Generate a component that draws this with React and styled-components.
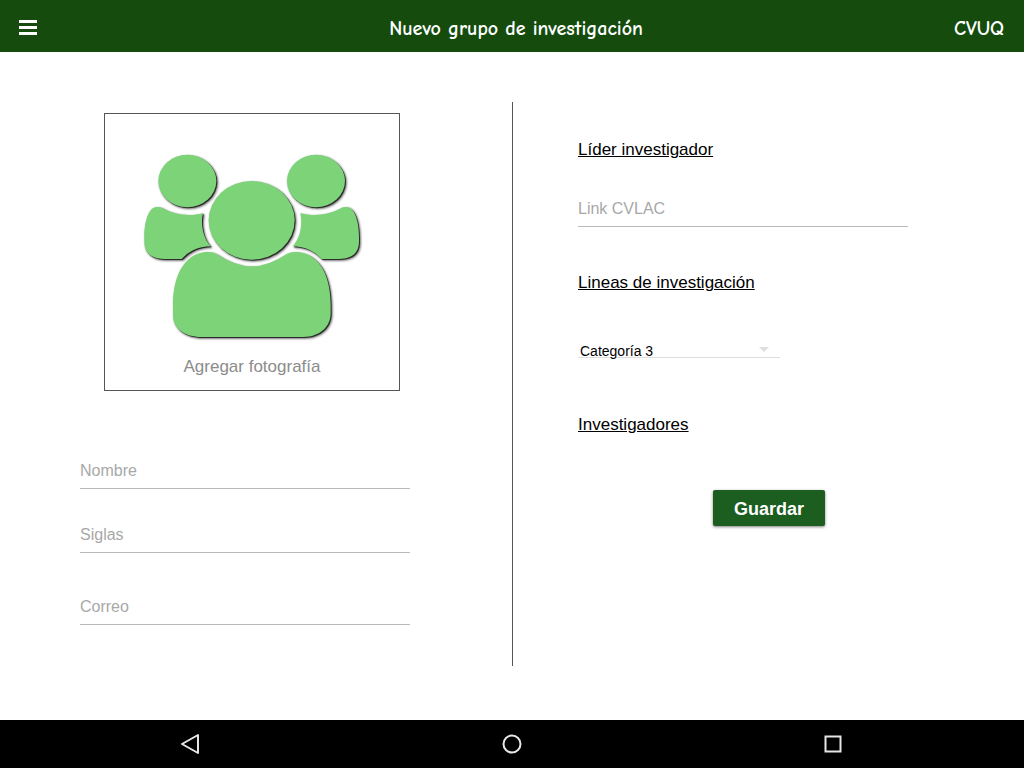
import React from "react";
import styled, { createGlobalStyle } from "styled-components";

const GlobalStyle = createGlobalStyle`
  *, *::before, *::after { box-sizing: border-box; }
  body {
    margin: 0;
    background: #fff;
    color: #000;
    font-family: "Liberation Sans", Arial, sans-serif;
  }
  button, input, select { font: inherit; }
`;

const Page = styled.div`
  display: flex;
  flex-direction: column;
  min-height: 100vh;
`;

const Header = styled.header`
  display: grid;
  grid-template-columns: 1fr auto 1fr;
  align-items: center;
  height: 52px;
  padding: 6px 20px 0 28px;
  background: #154c0e;
  color: #fff;
  font-family: "Comic Sans MS", "Comic Neue", Lato, sans-serif;
  font-size: 20px;
  font-weight: 700;
  line-height: 28px;
`;

const MenuButton = styled.button`
  display: flex;
  justify-self: start;
  margin-left: -12px;
  padding: 3px 3px 6px;
  border: 0;
  background: none;
  color: inherit;
`;

const Title = styled.h1`
  margin: 0;
  font: inherit;
`;

const Brand = styled.span`
  justify-self: end;
`;

const Main = styled.main`
  display: grid;
  grid-template-columns: 1fr 1fr;
  flex: 1;
  padding: 50px 0 54px;
`;

const Column = styled.section`
  display: flex;
  flex-direction: column;
  align-items: flex-start;
`;

const ProfileColumn = styled(Column)`
  padding: 11px 102px 0 80px;
`;

const DetailsColumn = styled(Column)`
  padding: 38px 116px 0 65px;
  border-left: 1px solid #555;
`;

const PhotoButton = styled.button`
  display: flex;
  flex-direction: column;
  align-items: center;
  gap: 13px;
  width: 296px;
  height: 278px;
  margin: 0 0 61px 24px;
  padding: 36px 0 0;
  border: 1px solid #555;
  background: #fff;
  color: #8c8c8c;
  font-size: 17px;
  line-height: 20px;
`;

const GroupArt = styled.svg`
  fill: #7dd378;
  filter: drop-shadow(1px 1px 0 rgba(0, 0, 0, 0.6)) drop-shadow(1px 1px 1px rgba(0, 0, 0, 0.7));
`;

const TextField = styled.input`
  width: 100%;
  height: 37px;
  margin-bottom: ${({ $space }) => $space}px;
  padding: 2px 0 0;
  border: 0;
  border-bottom: 1px solid #b9b9b9;
  border-radius: 0;
  outline: 0;
  background: none;
  color: #000;
  font-size: 16px;
  &::placeholder { color: #a8a8a8; opacity: 1; }
`;

const SectionLink = styled.a`
  margin-bottom: ${({ $space }) => $space}px;
  color: #000;
  font-size: 17px;
  line-height: 20px;
  text-decoration: underline;
  text-underline-offset: 1px;
`;

const SelectBox = styled.div`
  position: relative;
  width: 202px;
  margin-bottom: 53px;
`;

const Select = styled.select`
  display: block;
  width: 100%;
  height: 28px;
  padding: 5px 24px 0 2px;
  border: 0;
  border-radius: 0;
  outline: 0;
  appearance: none;
  background: linear-gradient(#dedede, #dedede) 0 23px / 100% 1px no-repeat;
  color: #000;
  font-size: 14px;
  line-height: 16px;
`;

const Caret = styled.svg`
  position: absolute;
  right: 11px;
  top: 13px;
  fill: #dedede;
  pointer-events: none;
`;

const SaveButton = styled.button`
  align-self: flex-end;
  width: 112px;
  height: 36px;
  margin-right: 83px;
  padding: 2px 0 0;
  border: 0;
  border-radius: 2px;
  background: #1b5e20;
  box-shadow: 0 1px 3px rgba(0, 0, 0, 0.5);
  color: #fff;
  font-size: 18px;
  font-weight: 700;
`;

const SystemBar = styled.nav`
  display: grid;
  grid-template-columns: repeat(3, 1fr);
  place-items: center;
  height: 48px;
  padding: 0 30px;
  background: #000;
`;

const SystemButton = styled.button`
  display: flex;
  padding: 0;
  border: 0;
  background: none;
`;

const SystemIcon = styled.svg`
  fill: none;
  stroke: #e6e6e6;
  stroke-width: 2;
`;

const SHOULDER =
  "M172 306C148 304 133 345 133 395V410C133 445 155 462 195 462H245C265 440 295 424 332 424C313 402 306 375 306 350C306 340 307 332 309 324C270 336 225 330 188 310Q180 305 172 306Z";

function GroupIcon() {
  return (
    <GroupArt width="224" height="194" viewBox="120 135 672 582" aria-hidden="true">
      <ellipse cx="262" cy="228" rx="87" ry="79" />
      <ellipse cx="648" cy="228" rx="87" ry="79" />
      <ellipse cx="455" cy="346" rx="129" ry="118" />
      <path d={SHOULDER} />
      <path d={SHOULDER} transform="translate(910 0) scale(-1 1)" />
      <path d="M325 441C262 441 219 500 219 600V630C219 670 252 696 305 696H610C660 696 692 665 692 625V600C692 500 650 441 585 441Q570 441 560 447Q505 484 456 484Q404 484 350 447Q340 441 325 441Z" />
    </GroupArt>
  );
}

export default function App() {
  return (
    <>
      <GlobalStyle />
      <Page>
        <Header>
          <MenuButton type="button" aria-label="Menú">
            <svg width="18" height="15" viewBox="0 0 18 15" fill="currentColor" aria-hidden="true">
              <path d="M0 0h18v3H0zM0 6h18v3H0zM0 12h18v3H0z" />
            </svg>
          </MenuButton>
          <Title>Nuevo grupo de investigación</Title>
          <Brand>CVUQ</Brand>
        </Header>
        <Main>
          <ProfileColumn>
            <PhotoButton type="button">
              <GroupIcon />
              Agregar fotografía
            </PhotoButton>
            <TextField aria-label="Nombre" placeholder="Nombre" $space={27} />
            <TextField aria-label="Siglas" placeholder="Siglas" $space={35} />
            <TextField type="email" aria-label="Correo" placeholder="Correo" $space={0} />
          </ProfileColumn>
          <DetailsColumn>
            <SectionLink href="#lider" $space={30}>Líder investigador</SectionLink>
            <TextField type="url" aria-label="Link CVLAC" placeholder="Link CVLAC" $space={46} />
            <SectionLink href="#lineas" $space={41}>Lineas de investigación</SectionLink>
            <SelectBox>
              <Select aria-label="Categoría" defaultValue="3">
                <option value="3">Categoría 3</option>
              </Select>
              <Caret width="10" height="5" viewBox="0 0 10 5" aria-hidden="true">
                <path d="M0 0h10L5 5z" />
              </Caret>
            </SelectBox>
            <SectionLink href="#investigadores" $space={55}>Investigadores</SectionLink>
            <SaveButton type="button">Guardar</SaveButton>
          </DetailsColumn>
        </Main>
        <SystemBar aria-label="Sistema">
          <SystemButton type="button" aria-label="Atrás">
            <SystemIcon width="20" height="22" viewBox="0 0 20 22">
              <path d="M17 2v18L1 11z" strokeLinejoin="round" />
            </SystemIcon>
          </SystemButton>
          <SystemButton type="button" aria-label="Inicio">
            <SystemIcon width="20" height="20" viewBox="0 0 20 20">
              <circle cx="10" cy="10" r="8.5" />
            </SystemIcon>
          </SystemButton>
          <SystemButton type="button" aria-label="Recientes">
            <SystemIcon width="18" height="18" viewBox="0 0 18 18">
              <path d="M1.5 1.5h15v15h-15z" />
            </SystemIcon>
          </SystemButton>
        </SystemBar>
      </Page>
    </>
  );
}
